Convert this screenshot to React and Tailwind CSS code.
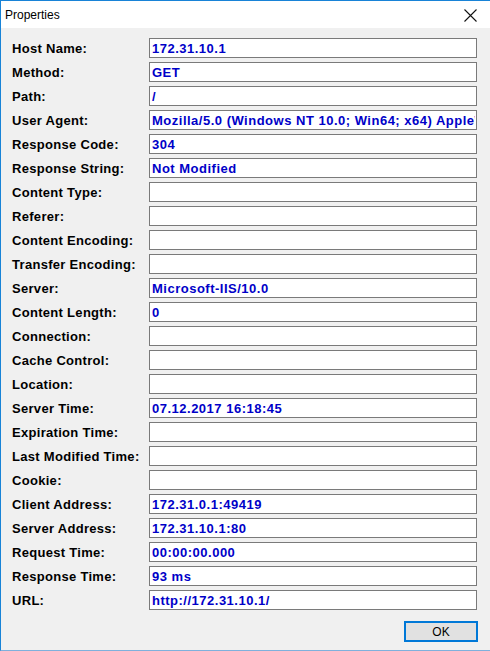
import React from "react";

const rows = [
  ["Host Name:", "172.31.10.1"],
  ["Method:", "GET"],
  ["Path:", "/"],
  ["User Agent:", "Mozilla/5.0 (Windows NT 10.0; Win64; x64) AppleWebKit/537.36 (KHTML, like Gecko)"],
  ["Response Code:", "304"],
  ["Response String:", "Not Modified"],
  ["Content Type:", ""],
  ["Referer:", ""],
  ["Content Encoding:", ""],
  ["Transfer Encoding:", ""],
  ["Server:", "Microsoft-IIS/10.0"],
  ["Content Length:", "0"],
  ["Connection:", ""],
  ["Cache Control:", ""],
  ["Location:", ""],
  ["Server Time:", "07.12.2017 16:18:45"],
  ["Expiration Time:", ""],
  ["Last Modified Time:", ""],
  ["Cookie:", ""],
  ["Client Address:", "172.31.0.1:49419"],
  ["Server Address:", "172.31.10.1:80"],
  ["Request Time:", "00:00:00.000"],
  ["Response Time:", "93 ms"],
  ["URL:", "http://172.31.10.1/"],
];

export default function App() {
  return (
    <div className="w-[490px] h-[651px] box-border border-l border-t border-b border-l-[#1883d7] border-t-[#1883d7] border-b-[#7fb0dc] bg-[#f0f0f0] flex flex-col overflow-hidden">
      <div className="h-[27px] bg-white flex items-center justify-between pl-[4px] pr-[13px] shrink-0">
        <span className="text-[12px] text-black leading-none" style={{ fontFamily: '"Liberation Sans", Arial, sans-serif' }}>
          Properties
        </span>
        <svg width="13" height="13" viewBox="0 0 13 13" className="mt-[1px]">
          <path d="M0.5 0.5 L12.5 12.5 M12.5 0.5 L0.5 12.5" stroke="#111" strokeWidth="1.1" fill="none" />
        </svg>
      </div>
      <div
        className="flex flex-col gap-[4px] pt-[10px] pl-[11px] pr-[12px]"
        style={{ fontFamily: '"Liberation Sans", Arial, sans-serif' }}
      >
        {rows.map(([label, value]) => (
          <div key={label} className="flex items-center h-[20px]">
            <div className="w-[137px] shrink-0 text-[13px] font-bold text-black tracking-[0.3px] leading-none whitespace-nowrap">
              {label}
            </div>
            <div className="w-[328px] h-[20px] shrink-0 box-border border border-[#7a7a7a] bg-white pl-[2px] pr-[1px]">
              <div className="h-full w-full overflow-hidden flex items-center">
                <span className="text-[13px] font-bold text-[#0000c8] tracking-[0.5px] leading-none whitespace-nowrap">
                  {value}
                </span>
              </div>
            </div>
          </div>
        ))}
      </div>
      <div className="flex justify-end pr-[12px] mt-[11px]">
        <div
          className="w-[74px] h-[21px] box-border border-2 border-[#0078d7] bg-[#e1e1e1] flex items-center justify-center text-[12px] text-black"
          style={{ fontFamily: '"Liberation Sans", Arial, sans-serif' }}
        >
          OK
        </div>
      </div>
    </div>
  );
}
